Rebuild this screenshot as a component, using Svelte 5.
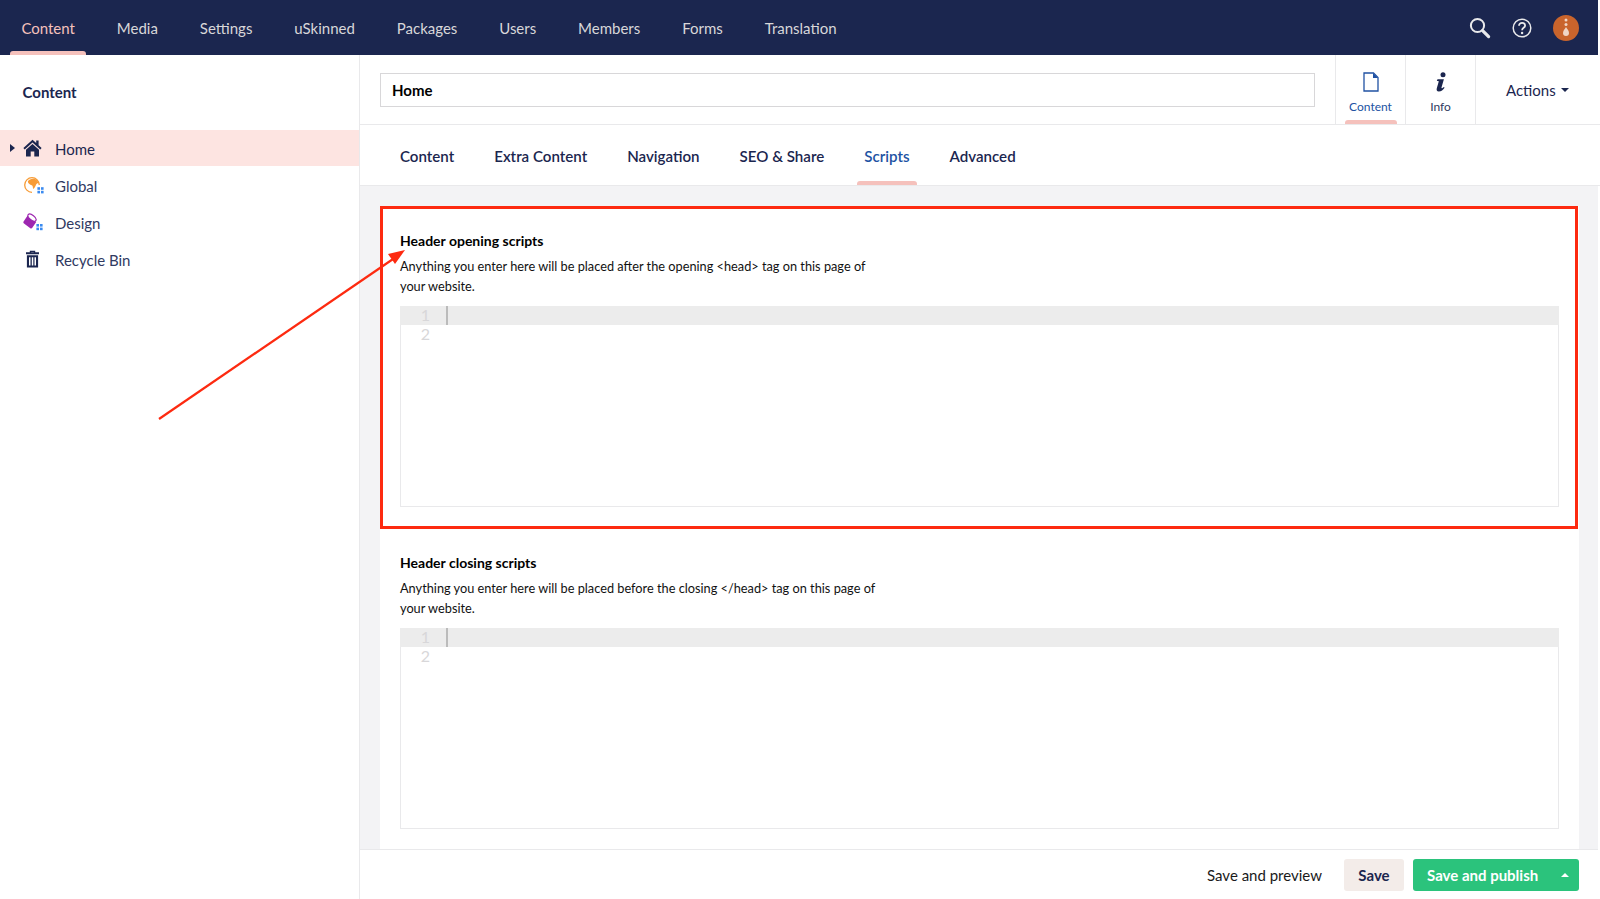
<script>
	const nav = ['Content', 'Media', 'Settings', 'uSkinned', 'Packages', 'Users', 'Members', 'Forms', 'Translation'];
	const tabs = ['Content', 'Extra Content', 'Navigation', 'SEO & Share', 'Scripts', 'Advanced'];
	const fields = [
		{
			title: 'Header opening scripts',
			desc: 'Anything you enter here will be placed after the opening <head> tag on this page of your website.'
		},
		{
			title: 'Header closing scripts',
			desc: 'Anything you enter here will be placed before the closing </head> tag on this page of your website.'
		}
	];
</script>

<div class="app">
	<header class="topbar">
		<nav class="mainnav">
			{#each nav as item, i}
				<a class="navitem" class:active={i === 0} href="#/">{item}</a>
			{/each}
		</nav>
		<div class="tools">
			<svg width="22" height="22" viewBox="0 0 22 22" fill="none" stroke="#e9e9eb">
				<circle cx="8.500" cy="8.500" r="6.600" stroke-width="2" />
				<path d="M13.600 13.600l6 6" stroke-width="3.200" stroke-linecap="round" />
			</svg>
			<svg width="20" height="20" viewBox="0 0 20 20" fill="none" stroke="#e9e9eb">
				<circle cx="10" cy="10" r="8.800" stroke-width="1.500" />
				<path d="M7 7.800c0-1.900 1.400-3 3.100-3 1.800 0 3 1.100 3 2.600 0 2.500-3 2.300-3 4.800" stroke-width="1.800" />
				<circle cx="10.100" cy="15" r="1.200" fill="#e9e9eb" stroke="none" />
			</svg>
			<div class="avatar">
				<svg width="10" height="20" viewBox="0 0 10 20" fill="#f0d5c5">
					<circle cx="5" cy="2" r="1.500" />
					<circle cx="5" cy="6.600" r="1.500" />
					<path d="M5 9c1 2 3 3.600 3 6a3 3 0 0 1-6 0c0-2.400 2-4 3-6z" />
				</svg>
			</div>
		</div>
	</header>

	<div class="main">
		<aside class="sidebar">
			<h2>Content</h2>
			<ul class="tree">
				<li class="selected">
					<span class="caret"></span>
					<svg class="ico" width="19" height="18" viewBox="0 0 19 18" fill="#1b264f">
						<path d="M9.500 0.800L0.400 9l1.300 1.400 7.800-7 7.800 7L18.600 9l-3-2.700V1.500h-2.400v2.600z" />
						<path d="M9.500 5L3 10.800V17.400h4.700v-5h3.600v5H16V10.800z" />
					</svg>
					<span class="label">Home</span>
				</li>
				<li>
					<svg class="ico colored" width="21" height="18" viewBox="0 0 21 18">
						<path d="M15.300 8A7.300 7.300 0 1 0 8 15.300" fill="none" stroke="#f79c37" stroke-width="1.300" />
						<path d="M3.800 4.400C5 2.300 8 1.400 10.800 2c2 .5 3.200 2 3.500 4-1 .2-1.500.8-2.300 1.800-.6 1.600-1.500 3.600-2.800 4.200-.5-1.500-.2-2.800-1-3.500C7 7.800 4.300 7.200 3.800 4.400z" fill="#f79c37" />
						<g fill="#3b8bf0">
							<rect x="13.400" y="10.200" width="2.600" height="2.600" />
							<rect x="17" y="10.200" width="2.600" height="2.600" />
							<rect x="13.400" y="13.800" width="2.600" height="2.600" />
							<rect x="17" y="13.800" width="2.600" height="2.600" />
						</g>
					</svg>
					Global
				</li>
				<li>
					<svg class="ico" width="21" height="19" viewBox="0 0 21 19">
						<path d="M4.600 2.500L.6 8.600c-.5.800-.3 1.500.4 2l6.300 4.600c.8.500 1.500.3 2-.4l3.900-5.800z" fill="#9d27b0" />
						<ellipse cx="9" cy="4.600" rx="4.800" ry="2.400" transform="rotate(38 9 4.600)" fill="#fff" stroke="#9d27b0" stroke-width="1.200" />
						<g fill="#3b8bf0">
							<rect x="13.400" y="11" width="2.600" height="2.600" />
							<rect x="17" y="11" width="2.600" height="2.600" />
							<rect x="13.400" y="14.600" width="2.600" height="2.600" />
							<rect x="17" y="14.600" width="2.600" height="2.600" />
						</g>
					</svg>
					Design
				</li>
				<li>
					<svg class="ico" width="19" height="18" viewBox="0 0 19 18" fill="#1b264f">
						<path d="M3 2.300h3.800V.8h5.400v1.500H16v2H3zM8.200 2.300h2.600v-.4H8.200z" />
						<path d="M3.900 5.300h11.200V17.400H3.900zM6 7.200v8.300h1.500V7.200zm2.800 0v8.300h1.500V7.200zm2.700 0v8.300H13V7.200z" fill-rule="evenodd" />
					</svg>
					Recycle Bin
				</li>
			</ul>
		</aside>

		<section class="editor">
			<div class="titlebar">
				<div class="namewrap"><input class="name" value="Home" /></div>
				<button class="appbtn on">
					<svg width="16" height="20" viewBox="0 0 16 20" fill="none" stroke="#2152a3" stroke-width="1.300">
						<path d="M1 1h9.500L15 5.500V19H1z" />
						<path d="M10 1v5h5" fill="#2152a3" stroke="none" />
					</svg>
					<span>Content</span>
				</button>
				<button class="appbtn">
					<svg width="14" height="20" viewBox="0 0 12 20" fill="#1b264f">
						<circle cx="8" cy="2.700" r="2.500" />
						<path d="M2.500 7.300h6.400L6.500 15.600c-.2.800.3 1 1 .5l1.400-1.200.7.800C8 18 6.300 19.500 3.800 19.500 1.800 19.500 1.300 18.200 1.800 16.300L3.600 10c.2-.8 0-1-.7-1H1.800z" />
					</svg>
					<span>Info</span>
				</button>
				<div class="actions">Actions <span class="down"></span></div>
			</div>

			<div class="tabs">
				{#each tabs as tab}
					<a class="tab" class:current={tab === 'Scripts'} href="#/">{tab}</a>
				{/each}
			</div>

			<div class="body">
				<div class="card">
					{#each fields as f}
						<div class="field">
							<h3>{f.title}</h3>
							<p>{f.desc}</p>
							<div class="code">
								<div class="line active"><span class="num">1</span><span class="cursor"></span></div>
								<div class="line"><span class="num">2</span></div>
							</div>
						</div>
					{/each}
				</div>
			</div>

			<footer class="footer">
				<span class="preview">Save and preview</span>
				<button class="save">Save</button>
				<div class="publish">
					<span>Save and publish</span>
					<span class="up"></span>
				</div>
			</footer>
		</section>
	</div>

	<!-- annotation drawn on top of the screenshot -->
	<div class="redbox"></div>
	<svg class="arrow" width="1600" height="899" viewBox="0 0 1600 899">
		<path d="M159 419L396 257" stroke="#fd2a10" stroke-width="2.200" fill="none" />
		<path d="M405 250L388 254 395 264z" fill="#fd2a10" />
	</svg>
</div>

<style>
	:global(body) {
		margin: 0;
		font-family: 'Lato', sans-serif;
		background: #fff;
		overflow: hidden;
	}

	.app {
		position: relative;
		width: 1600px;
		height: 899px;
		display: flex;
		flex-direction: column;
		color: #1b264f;
		font-size: 15px;
		overflow: hidden;
	}

	.topbar {
		height: 55px;
		width: 1598px;
		flex: none;
		background: #1b264f;
		display: flex;
		justify-content: space-between;
		align-items: center;
	}

	.mainnav {
		display: flex;
		height: 100%;
		padding-left: 10px;
	}

	.navitem {
		height: 100%;
		box-sizing: border-box;
		padding: 0 11.500px 0 11.400px;
		margin-right: 19px;
		line-height: 57px;
		font-size: 15px;
		color: #d8d7d9;
		text-decoration: none;
		position: relative;
	}

	.navitem.active {
		color: #f5c1bc;
	}

	.navitem.active::after {
		content: '';
		position: absolute;
		left: 0;
		right: 0;
		bottom: 0;
		height: 4px;
		border-radius: 3px 3px 0 0;
		background: #f5c1bc;
	}

	.tools {
		display: flex;
		align-items: center;
		padding-right: 19px;
	}

	.tools svg:nth-child(2) {
		margin: 0 21px 0 21px;
	}

	.avatar {
		width: 26px;
		height: 26px;
		border-radius: 50%;
		background: #c9642c;
		display: flex;
		align-items: center;
		justify-content: center;
	}

	.main {
		flex: 1;
		display: flex;
		min-height: 0;
	}

	.sidebar {
		width: 359px;
		flex: none;
		border-right: 1px solid #e9e9eb;
		box-sizing: content-box;
	}

	.sidebar h2 {
		margin: 0;
		padding: 27px 0 0 22.500px;
		height: 48px;
		font-size: 15px;
		line-height: 20px;
		font-weight: 700;
	}

	.tree {
		list-style: none;
		margin: 0;
		padding: 0;
	}

	.tree li {
		position: relative;
		height: 37px;
		display: flex;
		align-items: center;
		padding-left: 55px;
		font-size: 15px;
		color: #303a62;
	}

	.tree li.selected {
		height: 36px;
		margin-bottom: 1px;
		background: #fde4e1;
		color: #1b264f;
	}

	.label {
		padding-top: 2px;
	}

	.ico {
		position: absolute;
		left: 23px;
		top: 9px;
	}

	.ico.colored {
		left: 24px;
		top: 10px;
	}

	.caret {
		position: absolute;
		left: 10px;
		top: 14px;
		border-left: 5px solid #1b264f;
		border-top: 4px solid transparent;
		border-bottom: 4px solid transparent;
	}

	.editor {
		flex: 1;
		display: flex;
		flex-direction: column;
		min-width: 0;
	}

	.titlebar {
		height: 69px;
		flex: none;
		display: flex;
		border-bottom: 1px solid #e9e9eb;
		box-sizing: content-box;
	}

	.namewrap {
		width: 935px;
		padding: 18px 20px 0 20px;
	}

	.name {
		width: 100%;
		height: 34px;
		box-sizing: border-box;
		border: 1px solid #d8d7d9;
		padding: 0 11px;
		font: 700 15px 'Lato', sans-serif;
		color: #000;
		outline: none;
	}

	.appbtn {
		width: 70px;
		border: 0;
		border-left: 1px solid #e9e9eb;
		background: #fff;
		padding: 17px 0 0;
		display: flex;
		flex-direction: column;
		align-items: center;
		justify-content: flex-start;
		font: 12px 'Lato', sans-serif;
		color: #303a62;
		position: relative;
	}

	.appbtn span {
		margin-top: 7px;
	}

	.appbtn.on {
		color: #2152a3;
	}

	.appbtn.on::after {
		content: '';
		position: absolute;
		left: 9px;
		right: 8px;
		bottom: 0;
		height: 4px;
		border-radius: 3px 3px 0 0;
		background: #f5c1bc;
	}

	.actions {
		border-left: 1px solid #e9e9eb;
		flex: 1;
		padding-left: 30px;
		display: flex;
		align-items: center;
		font-size: 15px;
		white-space: pre;
	}

	.down,
	.up {
		display: inline-block;
		border-left: 4px solid transparent;
		border-right: 4px solid transparent;
	}

	.down {
		border-top: 4px solid #1b264f;
		margin-left: 1px;
	}

	.up {
		border-bottom: 4px solid #fff;
	}

	.tabs {
		height: 60px;
		flex: none;
		display: flex;
		padding-left: 20px;
		border-bottom: 1px solid #e9e9eb;
		box-sizing: content-box;
	}

	.tab {
		position: relative;
		padding: 0 20px;
		line-height: 63px;
		font-size: 15.100px;
		font-weight: 600;
		color: #1b264f;
		text-decoration: none;
		white-space: nowrap;
	}

	.tab.current {
		color: #2152a3;
	}

	.tab.current::after {
		content: '';
		position: absolute;
		left: 13px;
		right: 13px;
		bottom: 0;
		height: 4px;
		border-radius: 3px 3px 0 0;
		background: #f5c1bc;
	}

	.body {
		flex: 1;
		min-height: 0;
		overflow: hidden;
		background: #f3f3f5;
		padding: 20px 19px 0 20px;
		margin-right: 2px;
	}

	.card {
		background: #fff;
		padding: 0 20px;
		height: 100%;
		box-sizing: border-box;
	}

	.field {
		height: 322px;
		padding-top: 25px;
		box-sizing: border-box;
	}

	.field h3 {
		margin: 0;
		font-size: 14px;
		line-height: 20px;
		font-weight: 700;
		color: #000;
	}

	.field p {
		margin: 5px 0 10px;
		width: 480px;
		font-size: 12.750px;
		line-height: 20px;
		color: #111;
	}

	.code {
		height: 201px;
		box-sizing: border-box;
		border: 1px solid #e9e9eb;
		border-top: 0;
		font-size: 16px;
	}

	.line {
		height: 19px;
		display: flex;
		margin-left: -1px;
		margin-right: -1px;
		color: #d8d7d9;
		line-height: 17px;
	}

	.line.active {
		background: #ececec;
	}

	.num {
		width: 30px;
		text-align: right;
	}

	.cursor {
		width: 2px;
		height: 100%;
		margin-left: 16px;
		background: #bbb;
	}

	.footer {
		height: 50px;
		flex: none;
		box-sizing: border-box;
		border-top: 1px solid #e9e9eb;
		background: #fff;
		display: flex;
		align-items: center;
		justify-content: flex-end;
		padding-right: 19px;
		margin-right: 2px;
		border-right: 0;
	}

	.preview {
		font-size: 15px;
		color: #1a1a1a;
		margin-right: 22px;
	}

	.save {
		width: 60px;
		height: 32px;
		border: 0;
		border-radius: 3px;
		background: #f3ece9;
		color: #1b264f;
		font: 700 15px 'Lato', sans-serif;
		margin-right: 9px;
		padding: 0;
	}

	.publish {
		width: 166px;
		height: 32px;
		box-sizing: border-box;
		border-radius: 3px;
		background: #2bc37c;
		color: #fff;
		font-weight: 700;
		font-size: 15px;
		display: flex;
		align-items: center;
		justify-content: space-between;
		padding: 0 10px 0 14px;
	}

	.redbox {
		position: absolute;
		left: 380px;
		top: 206px;
		width: 1198px;
		height: 323px;
		box-sizing: border-box;
		border: 3px solid #fd2a10;
		pointer-events: none;
	}

	.arrow {
		position: absolute;
		left: 0;
		top: 0;
		pointer-events: none;
	}
</style>
